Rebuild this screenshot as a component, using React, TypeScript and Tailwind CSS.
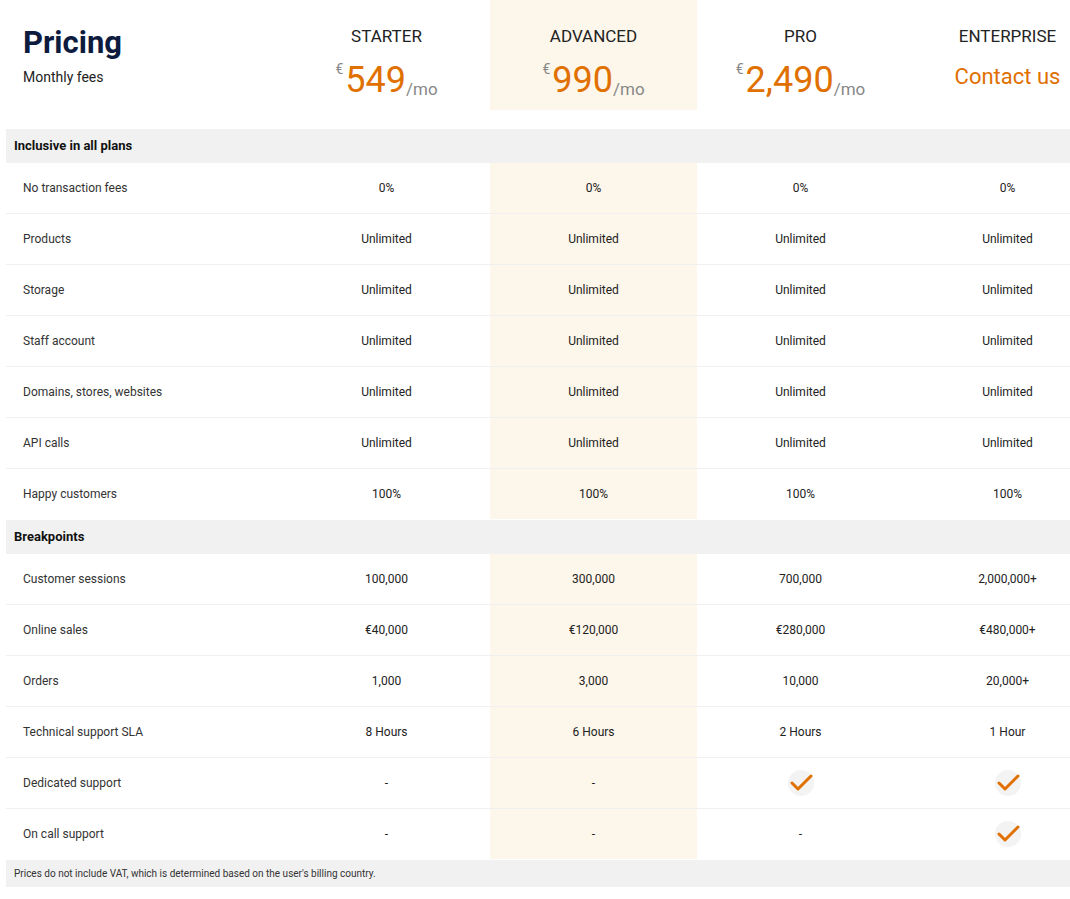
const plans = ["STARTER", "ADVANCED", "PRO", "ENTERPRISE"];
const prices = ["549", "990", "2,490"];

type Row = { label: string; values: (string | boolean)[] };

const inclusive: Row[] = [
  { label: "No transaction fees", values: ["0%", "0%", "0%", "0%"] },
  { label: "Products", values: ["Unlimited", "Unlimited", "Unlimited", "Unlimited"] },
  { label: "Storage", values: ["Unlimited", "Unlimited", "Unlimited", "Unlimited"] },
  { label: "Staff account", values: ["Unlimited", "Unlimited", "Unlimited", "Unlimited"] },
  { label: "Domains, stores, websites", values: ["Unlimited", "Unlimited", "Unlimited", "Unlimited"] },
  { label: "API calls", values: ["Unlimited", "Unlimited", "Unlimited", "Unlimited"] },
  { label: "Happy customers", values: ["100%", "100%", "100%", "100%"] },
];

const breakpoints: Row[] = [
  { label: "Customer sessions", values: ["100,000", "300,000", "700,000", "2,000,000+"] },
  { label: "Online sales", values: ["€40,000", "€120,000", "€280,000", "€480,000+"] },
  { label: "Orders", values: ["1,000", "3,000", "10,000", "20,000+"] },
  { label: "Technical support SLA", values: ["8 Hours", "6 Hours", "2 Hours", "1 Hour"] },
  { label: "Dedicated support", values: ["-", "-", true, true] },
  { label: "On call support", values: ["-", "-", "-", true] },
];

function Check() {
  return (
    <span className="flex h-[26px] w-[26px] items-center justify-center rounded-full bg-[#f3f3f3]">
      <svg width="24" height="20" viewBox="0 0 24 20" fill="none">
        <path d="M3 10 L9 16 L22 3" stroke="#e07000" strokeWidth="3" strokeLinecap="round" strokeLinejoin="round" />
      </svg>
    </span>
  );
}

function Cell({ value, band }: { value: string | boolean; band: boolean }) {
  return (
    <div className={`flex h-[50px] items-center justify-center text-[12px] text-[#222] ${band ? "bg-[#fdf6ea]" : ""}`}>
      {value === true ? <Check /> : value}
    </div>
  );
}

function Rows({ rows }: { rows: Row[] }) {
  return (
    <>
      {rows.map((r, i) => (
        <div key={r.label} className={`grid grid-cols-[277px_207px_207px_207px_207px] ${i < rows.length - 1 ? "border-b border-[#f0f0f0]" : "pb-px"}`}>
          <div className="flex h-[50px] items-center pl-[17px] text-[12px] text-[#333]">{r.label}</div>
          {r.values.map((v, j) => (
            <Cell key={j} value={v} band={j === 1} />
          ))}
        </div>
      ))}
    </>
  );
}

function Section({ title }: { title: string }) {
  return (
    <div className="grid grid-cols-[277px_207px_207px_207px_207px] bg-[#f1f1f1]">
      <div className="col-span-5 flex h-[34px] items-center pl-2 text-[13px] font-bold text-[#111]">{title}</div>
    </div>
  );
}

export default function App() {
  return (
    <div className="h-[899px] w-[1070px] overflow-hidden bg-white [font-family:Roboto,sans-serif]">
      <div className="ml-[6px] w-[1105px]">
        <div className="grid grid-cols-[277px_207px_207px_207px_207px]">
          <div className="pl-[17px] pt-[24px]">
            <div className="text-[31px] font-bold leading-[38px] text-[#0d1b3e]">Pricing</div>
            <div className="mt-[5px] text-[14px] text-[#222]">Monthly fees</div>
          </div>
          {plans.map((p, i) => (
            <div key={p} className={`flex h-[110px] flex-col items-center pt-[26px] ${i === 1 ? "bg-[#fdf6ea]" : ""}`}>
              <div className="text-[17px] leading-[20px] text-[#222]">{p}</div>
              {i < 3 ? (
                <div className="mt-[16px] flex items-end">
                  <span className="mb-[22px] mr-[2px] text-[14px] leading-none text-[#888]">€</span>
                  <span className="text-[36px] leading-[36px] text-[#e07000]">{prices[i]}</span>
                  <span className="mb-[-4px] text-[17px] text-[#888]">/mo</span>
                </div>
              ) : (
                <div className="mt-[14px] text-[22px] text-[#e07000]">Contact us</div>
              )}
            </div>
          ))}
        </div>
        <div className="h-[19px]" />
        <Section title="Inclusive in all plans" />
        <Rows rows={inclusive} />
        <Section title="Breakpoints" />
        <Rows rows={breakpoints} />
      </div>
      <div className="ml-[6px] flex h-[27px] w-[1064px] items-center bg-[#f1f1f1] pl-2 text-[10px] text-[#333]">
        Prices do not include VAT, which is determined based on the user's billing country.
      </div>
    </div>
  );
}
